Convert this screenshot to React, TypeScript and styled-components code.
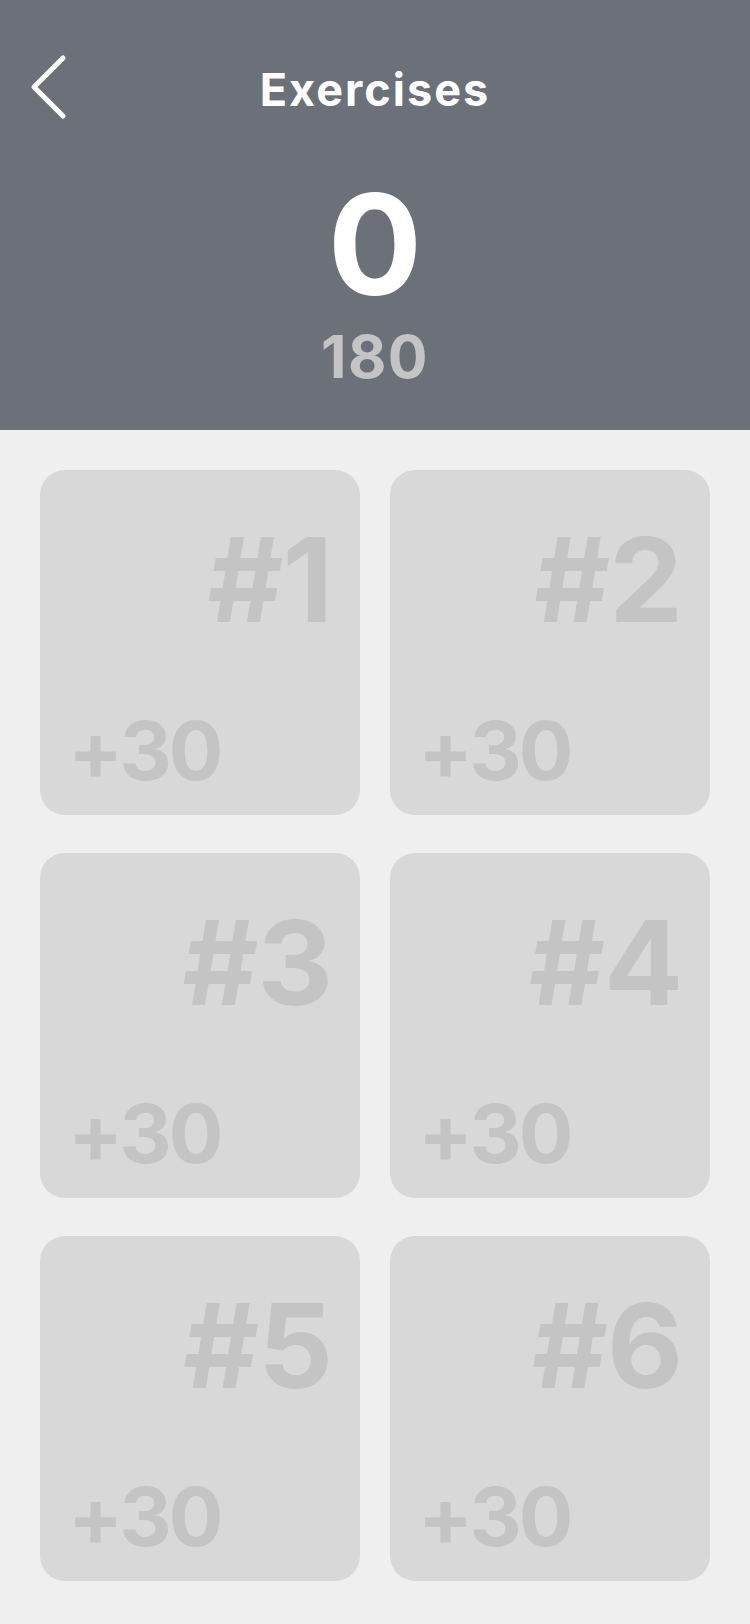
import React from "react";
import styled, { createGlobalStyle } from "styled-components";

const GlobalStyle = createGlobalStyle`
  html, body {
    margin: 0;
    padding: 0;
    background: #efefef;
  }
  body {
    font-family: "Inter", "Liberation Sans", Arial, sans-serif;
  }
  * { box-sizing: border-box; }
`;

const Page = styled.div`
  min-height: 100vh;
  background: #efefef;
  display: flex;
  flex-direction: column;
`;

const Header = styled.header`
  height: 430px;
  background: #6c7078;
  display: flex;
  flex-direction: column;
  align-items: stretch;
  padding-top: 56px;
`;

const NavBar = styled.div`
  display: grid;
  grid-template-columns: 1fr auto 1fr;
  height: 62px;
`;

const BackButton = styled.button`
  justify-self: start;
  background: none;
  border: none;
  padding: 0;
  margin-left: 28px;
  width: 40px;
  height: 62px;
  display: flex;
  align-items: center;
  cursor: pointer;
`;

const Title = styled.h1`
  align-self: start;
  margin: 11px 0 0;
  font-size: 45px;
  line-height: 45px;
  font-weight: 700;
  color: #ffffff;
  letter-spacing: 2px;
`;

const Score = styled.div`
  margin-top: 56px;
  display: flex;
  flex-direction: column;
  align-items: center;
`;

const ScoreValue = styled.div`
  font-size: 140px;
  line-height: 140px;
  font-weight: 700;
  color: #ffffff;
`;

const ScoreTotal = styled.div`
  margin-top: 13px;
  font-size: 59px;
  line-height: 59px;
  font-weight: 700;
  color: #c4c4c4;
  letter-spacing: 1.5px;
`;

const Grid = styled.main`
  display: grid;
  grid-template-columns: 320px 320px;
  column-gap: 30px;
  row-gap: 38px;
  padding: 40px 40px 43px;
`;

const Card = styled.button`
  height: 345px;
  border: none;
  border-radius: 25px;
  background: #d8d8d8;
  display: flex;
  flex-direction: column;
  justify-content: space-between;
  padding: 51px 28px 23px 28px;
  font-family: inherit;
  cursor: pointer;
  text-align: left;
`;

const CardNumber = styled.span`
  align-self: flex-end;
  font-size: 117px;
  line-height: 117px;
  font-weight: 700;
  color: #c4c4c4;
  letter-spacing: -1px;
`;

const CardPoints = styled.span`
  align-self: flex-start;
  font-size: 81px;
  line-height: 81px;
  font-weight: 700;
  color: #c4c4c4;
  letter-spacing: -3px;
`;

const ChevronLeft = () => (
  <svg width="40" height="66" viewBox="0 0 40 66" fill="none">
    <path
      d="M35 4 L6 33 L35 62"
      stroke="#ffffff"
      strokeWidth="5"
      strokeLinecap="round"
      strokeLinejoin="round"
    />
  </svg>
);

const exercises = [1, 2, 3, 4, 5, 6].map((n) => ({ id: n, points: 30 }));

export default function App() {
  return (
    <>
      <GlobalStyle />
      <Page>
        <Header>
          <NavBar>
            <BackButton aria-label="Back">
              <ChevronLeft />
            </BackButton>
            <Title>Exercises</Title>
            <div />
          </NavBar>
          <Score>
            <ScoreValue>0</ScoreValue>
            <ScoreTotal>180</ScoreTotal>
          </Score>
        </Header>
        <Grid>
          {exercises.map((ex) => (
            <Card key={ex.id}>
              <CardNumber>#{ex.id}</CardNumber>
              <CardPoints>+{ex.points}</CardPoints>
            </Card>
          ))}
        </Grid>
      </Page>
    </>
  );
}
